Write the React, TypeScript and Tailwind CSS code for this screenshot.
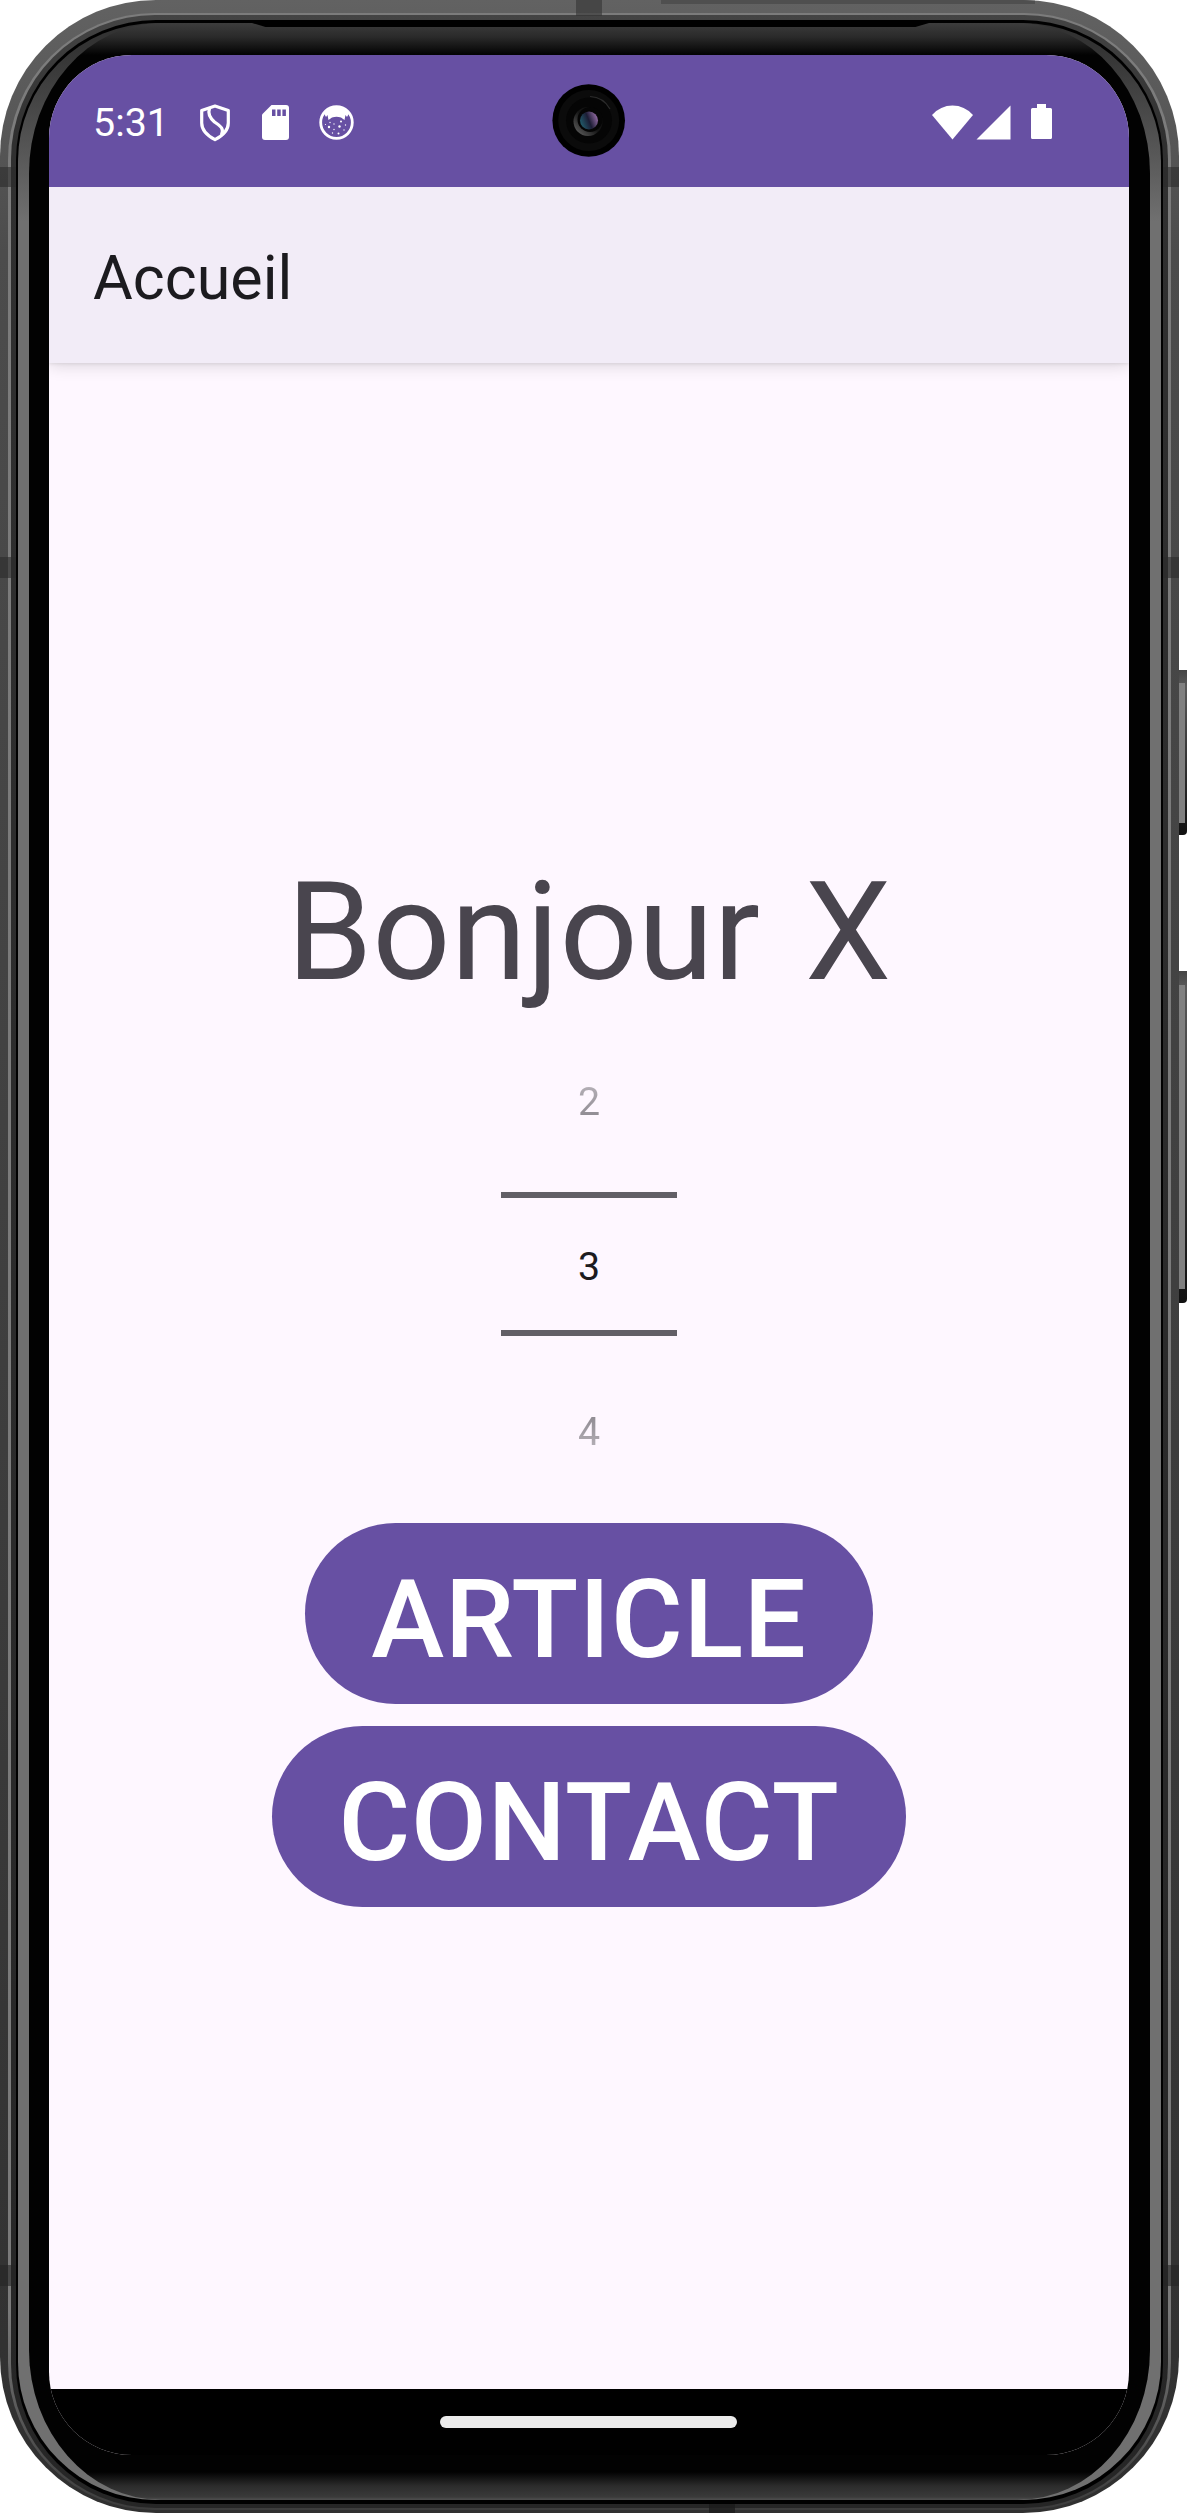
function ShieldIcon() {
  return (
    <svg width="32" height="38" viewBox="0 0 32 38" fill="none" stroke="white" strokeWidth="3.2" strokeLinejoin="round" className="ml-[37px]">
      <path d="M16 2 L29.3 6.5 V19 C29.3 26.5 23 32 16 35.6 C9 32 2.7 26.5 2.7 19 V6.5 Z" />
      <path d="M10.5 4.5 C8.5 10 11 14 15.5 18 C21 22 25.5 24 22.5 31" />
    </svg>
  );
}

function SdCardIcon() {
  return (
    <svg width="27" height="35" viewBox="0 0 27 35" className="ml-[31px]">
      <path d="M9.5 0 H24 A3 3 0 0 1 27 3 V32 A3 3 0 0 1 24 35 H3 A3 3 0 0 1 0 32 V9.5 Z" fill="white" />
      <path d="M10 4.5h3.5v6.5h-3.5z M15.2 4.5h3.5v6.5h-3.5z M20.4 4.5h3.5v6.5h-3.5z" fill="#6750a3" />
    </svg>
  );
}

function CatIcon() {
  return (
    <svg width="35" height="35" viewBox="0 0 35 35" className="ml-[30px]">
      <circle cx="17.5" cy="17.5" r="15.8" fill="none" stroke="white" strokeWidth="2.8" />
      <path d="M5 8.5 C9 0 26 0 30 8.5 L28 12 L26.5 10 L25.5 15 L22 12.5 Q17.5 11 13 12.5 L9.5 15 L8.5 10 L7 12 Z" fill="white" />
      <g fill="white">
        <circle cx="10" cy="22" r="1.2" />
        <circle cx="11" cy="17.5" r=".7" />
        <circle cx="15" cy="19" r=".7" />
        <circle cx="20.5" cy="21.5" r="1.2" />
        <circle cx="22" cy="16.5" r="1" />
        <circle cx="26.5" cy="20" r=".7" />
        <circle cx="15" cy="24.5" r=".7" />
        <circle cx="19.5" cy="28.5" r="1" />
        <circle cx="25" cy="25" r=".7" />
        <circle cx="6.5" cy="19.5" r=".6" />
        <circle cx="13.5" cy="28" r=".7" />
      </g>
    </svg>
  );
}

function Camera() {
  return (
    <svg width="74" height="74" viewBox="0 0 74 74" className="absolute top-[28px] left-[503px]">
      <defs>
        <linearGradient id="rim" x1="0" y1="1" x2="1" y2="0">
          <stop offset="0" stopColor="#6a6a6a" />
          <stop offset=".5" stopColor="#151515" />
          <stop offset="1" stopColor="#0c0c0c" />
        </linearGradient>
        <linearGradient id="lens" x1="0" y1=".7" x2="1" y2=".3">
          <stop offset="0" stopColor="#225f6e" />
          <stop offset=".5" stopColor="#1c1c34" />
          <stop offset="1" stopColor="#9a70aa" />
        </linearGradient>
      </defs>
      <circle cx="36.7" cy="37.5" r="36.3" fill="#000" />
      <circle cx="36.7" cy="37.5" r="30.5" fill="#0b0b0b" />
      <circle cx="37" cy="37.5" r="23" fill="#050505" />
      <path d="M38 13.5 A24 24 0 0 1 58 26" fill="none" stroke="#2c2c2c" strokeWidth="1.2" />
      <circle cx="36" cy="38.5" r="14.5" fill="url(#rim)" />
      <circle cx="38" cy="36.5" r="12.5" fill="#050505" />
      <circle cx="37" cy="37.5" r="10.5" fill="#050505" />
      <circle cx="37" cy="37.5" r="9" fill="url(#lens)" />
    </svg>
  );
}

function StatusBar() {
  return (
    <div className="relative z-10 flex h-[132px] shrink-0 items-center bg-[#6750a3] pt-[3px] pl-[44px]">
      <span className="w-[69px] text-[39.4px] leading-[44px] whitespace-nowrap text-white">5:31</span>
      <ShieldIcon />
      <SdCardIcon />
      <CatIcon />
      <Camera />
      <svg width="41" height="35" viewBox="0 0 41 35" fill="white" className="ml-auto">
        <path d="M0 10 Q8.5 .5 20.5 .5 Q32.5 .5 41 10 L20.5 34.5 Z" />
      </svg>
      <svg width="35" height="35" viewBox="0 0 35 35" fill="white" className="ml-[3px]">
        <path d="M.5 34.5 L34.5 0.5 V34.5 Z" />
      </svg>
      <svg width="21" height="35" viewBox="0 0 21 35" fill="white" className="mr-[77px] mb-[2px] ml-[20px]">
        <path d="M6 0 H15 V4 H19.5 A1.5 1.5 0 0 1 21 5.5 V33.5 A1.5 1.5 0 0 1 19.5 35 H1.5 A1.5 1.5 0 0 1 0 33.5 V5.5 A1.5 1.5 0 0 1 1.5 4 H6 Z" />
      </svg>
    </div>
  );
}

function Screen() {
  return (
    <div className="flex h-[2400px] w-[1080px] flex-col overflow-hidden rounded-[83px] bg-[#fef7ff]">
      <StatusBar />
      <header className="relative flex h-[176px] shrink-0 items-center bg-[#f2ecf7] pt-[6px] pl-[44px] shadow-[0_2px_16px_rgba(0,0,0,0.15),0_1px_3px_rgba(0,0,0,0.08)]">
        <h1 className="text-[61px] leading-[72px] text-[#1c1b1f]">Accueil</h1>
      </header>
      <main className="flex flex-1 flex-col items-center pt-[490px]">
        <p className="h-[160px] text-[137.4px] leading-[160px] whitespace-pre text-[#49454e] [word-spacing:11px]">Bonjour X</p>
        <div className="mt-[6px] flex w-[176px] flex-col items-center text-[39.4px] leading-[44px]">
          <span className="flex h-[165px] items-center bg-linear-to-b from-[#b5b0b7] from-40% to-[#8e8a91] to-60% bg-clip-text text-transparent">2</span>
          <div className="flex h-[165px] w-full flex-col pt-[8px]">
            <span className="flex h-[144px] items-center justify-center border-y-[6px] border-[#625f66] pt-[5px] text-[#1c1b1f]">3</span>
          </div>
          <span className="flex h-[165px] items-center bg-linear-to-b from-[#8e8a91] from-40% to-[#b5b0b7] to-60% bg-clip-text text-transparent">4</span>
        </div>
        <button className="mt-[9px] h-[181px] w-[568px] rounded-full bg-[#6750a3] pt-[13px] text-[110px] leading-[130px] font-medium tracking-[0.0072em] text-white">ARTICLE</button>
        <button className="mt-[22px] h-[181px] w-[634px] rounded-full bg-[#6750a3] pt-[13px] text-[110px] leading-[130px] font-medium tracking-[0.0072em] text-white">CONTACT</button>
      </main>
      <nav className="flex h-[66px] shrink-0 justify-center bg-black pt-[27px]">
        <div className="h-[12px] w-[297px] -translate-x-[1px] rounded-full bg-[#ebebeb]" />
      </nav>
    </div>
  );
}

export default function App() {
  return (
    <div className="relative h-[2513px] w-[1187px] overflow-hidden bg-white font-[Roboto,sans-serif]">
      <div className="absolute top-[670px] left-[1175px] h-[165px] w-[12px] rounded-b-[4px] bg-linear-to-b from-[#444] via-[#5a5a5a] via-10% to-[#111]">
        <div className="mt-[13px] ml-[4px] h-[140px] w-[6px] bg-[#808080]" />
      </div>
      <div className="absolute top-[971px] left-[1175px] h-[332px] w-[12px] rounded-b-[4px] bg-linear-to-b from-[#444] via-[#5a5a5a] via-5% to-[#111]">
        <div className="mt-[14px] ml-[4px] h-[304px] w-[6px] bg-[#808080]" />
      </div>

      {/* Metal body: outer edge, bright rim, groove, side reflection, then the glass */}
      <div className="relative h-[2513px] w-[1179px] overflow-hidden rounded-[156px] bg-linear-to-b from-[#626262] via-[#4c4c4c] via-10% to-[#303030] px-[8px] pt-[13px] pb-[3px]">
        <div className="absolute top-0 left-[661px] h-[4px] w-[374px] bg-[#4f4f4f]" />
        <div className="h-full rounded-[147px] bg-linear-to-b from-[#7c7c7c] via-[#7a7a7a] via-92% to-[#3c3c3c] px-[3px] pt-[2px] pb-[2px]">
          <div className="h-full rounded-[144px] bg-linear-to-b from-[#444] via-[#303030] via-5% to-[#262626] px-[5px] pt-[5px] pb-[4px]">
            <div className="h-full rounded-[140px] bg-black px-[2px] pt-[3px] pb-[4px]">
              <div className="h-full rounded-[138px] bg-linear-to-b from-[#333] from-1% via-[#707070] via-8% to-[#707070] to-97% px-[11px]">
                <div className="relative h-full rounded-[132px/150px] bg-[linear-gradient(to_bottom,#3c3c3c_0,#2a2a2a_14px,#020202_32px,#020202_2449px,#2c2c2c_2463px,#3a3a3a_2474px,#4a4a4a_2476px)] px-[20px] pt-[32px]">
                  <div className="absolute top-0 left-[223px] h-[4px] w-[677px] bg-black [clip-path:polygon(0_0,100%_0,98%_100%,2%_100%)]" />
                  <Screen />
                </div>
              </div>
            </div>
          </div>
        </div>
        <div className="absolute top-0 left-[576px] h-[16px] w-[26px] bg-[#333]/60" />
        <div className="absolute top-[167px] left-0 h-[20px] w-[16px] bg-[#2c2c2c]/60" />
        <div className="absolute top-[167px] right-0 h-[20px] w-[16px] bg-[#2c2c2c]/60" />
        <div className="absolute top-[557px] left-0 h-[21px] w-[16px] bg-[#2c2c2c]/60" />
        <div className="absolute top-[557px] right-0 h-[21px] w-[16px] bg-[#2c2c2c]/60" />
        <div className="absolute top-[2265px] left-0 h-[21px] w-[16px] bg-[#252525]/60" />
        <div className="absolute top-[2265px] right-0 h-[21px] w-[16px] bg-[#252525]/60" />
        <div className="absolute bottom-0 left-[709px] h-[9px] w-[26px] bg-[#1c1c1c]/80" />
      </div>
    </div>
  );
}
